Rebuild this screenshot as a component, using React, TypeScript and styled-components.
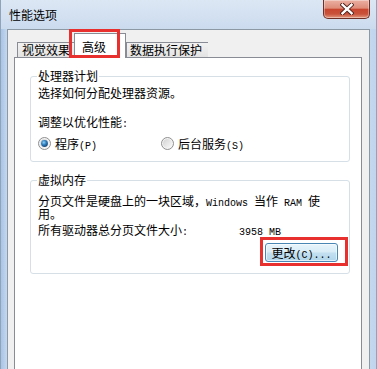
import React from 'react';
import styled, { createGlobalStyle } from 'styled-components';

const Global = createGlobalStyle`
  html, body { margin: 0; padding: 0; width: 377px; height: 369px; overflow: hidden; background: #fff; }
  body { font-family: "Noto Sans CJK SC", "Liberation Sans", sans-serif; font-size: 12px; color: #000; }
  * { box-sizing: border-box; }
`;

const Window = styled.div`
  width: 377px;
  height: 369px;
  display: flex;
  flex-direction: column;
  padding: 0 7px;
  background: linear-gradient(to right, #8fa3bb 0, #8fa3bb 1px, #aac4e4 1px, #c4d8ef 7px, #c4d8ef 370px, #c0d5ee 376px, #8fa3bb 376px);
`;

const TitleBar = styled.div`
  height: 29px;
  flex: none;
  display: flex;
  justify-content: space-between;
  align-items: flex-start;
  margin: 0 -6px;
  padding: 0 6px;
  background: linear-gradient(#dce7f4, #cbdbee);
`;

const Title = styled.div`
  align-self: center;
  padding-left: 2px;
  line-height: 12px;
  color: #000;
`;

const CloseButton = styled.div`
  width: 47px;
  height: 19px;
  border: 1px solid #6e3026;
  border-top: none;
  border-radius: 0 0 5px 5px;
  background: linear-gradient(#eab0a3 0%, #de8c79 45%, #c8462f 52%, #c9523a 78%, #e39a80 100%);
  box-shadow: inset 0 0 0 1px rgba(255, 255, 255, 0.35);
  display: flex;
  align-items: center;
  justify-content: center;
`;

const Client = styled.div`
  flex: 1;
  position: relative;
  display: flex;
  flex-direction: column;
  border: 1px solid #8d98a5;
  border-bottom: none;
  background: #f0f0f0;
  padding: 3px 7px 0 6px;
`;

const TabRow = styled.div`
  position: relative;
  z-index: 1;
  height: 25px;
  margin-bottom: -1px;
  display: flex;
  align-items: flex-end;
  padding-left: 3px;
`;

const Tab = styled.div<{ $w: number; $active?: boolean; $pl: number }>`
  width: ${p => p.$w}px;
  height: ${p => (p.$active ? 25 : 16)}px;
  padding-left: ${p => p.$pl}px;
  padding-top: ${p => (p.$active ? 7 : 1)}px;
  line-height: 12px;
  white-space: nowrap;
  border: 1px solid #898c95;
  border-bottom: ${p => (p.$active ? 'none' : '1px solid #898c95')};
  border-right: ${p => (p.$active ? '1px solid #898c95' : 'none')};
  background: ${p => (p.$active ? '#fff' : 'linear-gradient(#f2f2f2, #e3e3e3)')};
`;

const TabHighlight = styled.div`
  position: absolute;
  left: 61px;
  top: -1px;
  width: 51px;
  height: 29px;
  border: 3px solid #e8312f;
  z-index: 2;
  pointer-events: none;
`;

const Panel = styled.div`
  flex: 1;
  background: #fff;
  border: 1px solid #898c95;
  border-bottom: none;
  padding: 12px 11px 0 15px;
  display: flex;
  flex-direction: column;
  gap: 12px;
`;

const Group = styled.fieldset<{ $pb: number; $pt: number }>`
  margin: 0;
  border: 1px solid #d5dfe5;
  border-radius: 3px;
  padding: ${p => p.$pt}px 7px ${p => p.$pb}px 7px;
  min-width: 0;
`;

const Legend = styled.legend`
  padding: 0 1px;
  margin-left: -1px;
  height: 12px;
  line-height: 12px;
  background: #fff;
`;

const Line = styled.div<{ $mt?: number }>`
  display: block;
  height: 12px;
  line-height: 12px;
  margin-top: ${p => p.$mt ?? 0}px;
  white-space: nowrap;
`;

const Mono = styled.span`
  font-family: "Liberation Mono", "DejaVu Sans Mono", monospace;
  font-size: 10px;
  line-height: 0;
`;

const RadioRow = styled.div`
  display: flex;
  margin-top: 9px;
  height: 13px;
`;

const RadioOption = styled.label<{ $w?: number }>`
  display: flex;
  align-items: center;
  gap: 4px;
  width: ${p => (p.$w ? `${p.$w}px` : 'auto')};
  line-height: 12px;
  white-space: nowrap;
`;

const SizeRow = styled.div`
  display: flex;
  align-items: baseline;
  height: 12px;
  line-height: 12px;
  margin-top: 4px;
  white-space: nowrap;
`;

const SizeLabel = styled.span`
  width: 201px;
`;

const SizeValue = styled.span`
  font-family: "Liberation Mono", "DejaVu Sans Mono", monospace;
  font-size: 10px;
  line-height: 12px;
`;

const ButtonRow = styled.div`
  display: flex;
  justify-content: flex-end;
  margin-top: 1px;
  margin-right: -6px;
`;

const Highlight = styled.div`
  border: 3px solid #e8312f;
  padding: 3px 7px 1px 2px;
`;

const PushButton = styled.button`
  width: 73px;
  height: 19px;
  padding: 0;
  border: 1px solid #4a86b4;
  border-radius: 3px;
  font: inherit;
  line-height: 16px;
  color: #000;
  background: linear-gradient(#e8f4fb 0%, #d8ecf7 48%, #c3e0f1 52%, #b1d5ea 100%);
  box-shadow: inset 0 0 0 1px rgba(255, 255, 255, 0.6);
`;

const Radio: React.FC<{ checked?: boolean }> = ({ checked }) => (
  <svg width="13" height="13" viewBox="0 0 13 13">
    <defs>
      <linearGradient id={checked ? 'rbg1' : 'rbg0'} x1="0" y1="0" x2="1" y2="1">
        <stop offset="0" stopColor="#d2d2d2" />
        <stop offset="1" stopColor="#fbfbfb" />
      </linearGradient>
      <radialGradient id="rdot" cx="0.4" cy="0.35" r="0.7">
        <stop offset="0" stopColor="#8fd0f3" />
        <stop offset="0.5" stopColor="#2c7dbe" />
        <stop offset="1" stopColor="#173f6e" />
      </radialGradient>
    </defs>
    <circle cx="6.5" cy="6.5" r="6" fill="#f4f4f4" stroke="#8f8f8f" />
    <circle cx="6.5" cy="6.5" r="4.6" fill={`url(#${checked ? 'rbg1' : 'rbg0'})`} />
    {checked && <circle cx="6.5" cy="6.5" r="3.4" fill="url(#rdot)" />}
  </svg>
);

const CloseIcon = () => (
  <svg width="14" height="12" viewBox="0 0 14 12">
    <path d="M2.5 1.8 L11.5 10.2 M11.5 1.8 L2.5 10.2" stroke="#4b1c15" strokeWidth="4.2" strokeLinecap="square" />
    <path d="M2.5 1.8 L11.5 10.2 M11.5 1.8 L2.5 10.2" stroke="#ffffff" strokeWidth="2.4" strokeLinecap="square" />
  </svg>
);

export default function App() {
  return (
    <>
      <Global />
      <Window>
        <TitleBar>
          <Title>性能选项</Title>
          <CloseButton>
            <CloseIcon />
          </CloseButton>
        </TitleBar>
        <Client>
          <TabRow>
            <Tab $w={57} $pl={4}>视觉效果</Tab>
            <Tab $w={52} $pl={7} $active>高级</Tab>
            <Tab $w={82} $pl={3}>数据执行保护</Tab>
          </TabRow>
          <TabHighlight />
          <Panel>
            <Group $pt={5} $pb={11}>
              <Legend>处理器计划</Legend>
              <Line>选择如何分配处理器资源。</Line>
              <Line $mt={17}>调整以优化性能<Mono>:</Mono></Line>
              <RadioRow>
                <RadioOption $w={123}>
                  <Radio checked />
                  <span>程序<Mono>(P)</Mono></span>
                </RadioOption>
                <RadioOption>
                  <Radio />
                  <span>后台服务<Mono>(S)</Mono></span>
                </RadioOption>
              </RadioRow>
            </Group>
            <Group $pt={9} $pb={7}>
              <Legend>虚拟内存</Legend>
              <Line>
                分页文件是硬盘上的一块区域，<Mono>Windows </Mono>当作<Mono> RAM </Mono>使
              </Line>
              <Line $mt={1}>用。</Line>
              <SizeRow>
                <SizeLabel>所有驱动器总分页文件大小<Mono>:</Mono></SizeLabel>
                <SizeValue>3958 MB</SizeValue>
              </SizeRow>
              <ButtonRow>
                <Highlight>
                  <PushButton>更改<Mono>(C)...</Mono></PushButton>
                </Highlight>
              </ButtonRow>
            </Group>
          </Panel>
        </Client>
      </Window>
    </>
  );
}
